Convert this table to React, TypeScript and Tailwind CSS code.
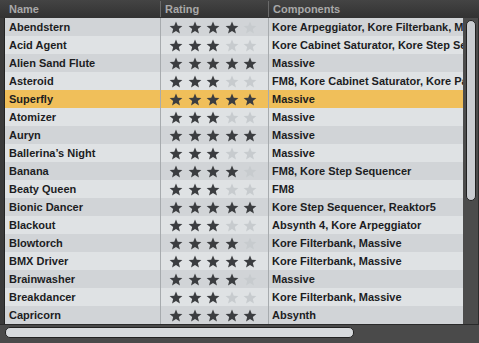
import React from "react";

type Preset = {
  name: string;
  rating: number;
  components: string;
};

const presets: Preset[] = [
  { name: "Abendstern", rating: 4, components: "Kore Arpeggiator, Kore Filterbank, Massive" },
  { name: "Acid Agent", rating: 3, components: "Kore Cabinet Saturator, Kore Step Sequencer" },
  { name: "Alien Sand Flute", rating: 5, components: "Massive" },
  { name: "Asteroid", rating: 3, components: "FM8, Kore Cabinet Saturator, Kore Pattern" },
  { name: "Superfly", rating: 5, components: "Massive" },
  { name: "Atomizer", rating: 3, components: "Massive" },
  { name: "Auryn", rating: 5, components: "Massive" },
  { name: "Ballerina’s Night", rating: 3, components: "Massive" },
  { name: "Banana", rating: 4, components: "FM8, Kore Step Sequencer" },
  { name: "Beaty Queen", rating: 3, components: "FM8" },
  { name: "Bionic Dancer", rating: 5, components: "Kore Step Sequencer, Reaktor5" },
  { name: "Blackout", rating: 3, components: "Absynth 4, Kore Arpeggiator" },
  { name: "Blowtorch", rating: 4, components: "Kore Filterbank, Massive" },
  { name: "BMX Driver", rating: 5, components: "Kore Filterbank, Massive" },
  { name: "Brainwasher", rating: 4, components: "Massive" },
  { name: "Breakdancer", rating: 3, components: "Kore Filterbank, Massive" },
  { name: "Capricorn", rating: 5, components: "Absynth" },
];

const SELECTED = "Superfly";

function Star({ filled }: { filled: boolean }) {
  return (
    <svg width="14" height="13" viewBox="0 0 24 23" className="shrink-0">
      <path
        d="M12 0.8l3.1 7.6 8.2.5-6.3 5.3 2 8L12 17.8l-7 4.4 2-8L.7 8.9l8.2-.5z"
        fill={filled ? "#3b3d40" : "#c7cbce"}
      />
    </svg>
  );
}

function Row({ preset, index }: { preset: Preset; index: number }) {
  const selected = preset.name === SELECTED;
  const bg = selected ? "bg-[#f0bf5a]" : index % 2 === 0 ? "bg-[#d1d4d7]" : "bg-[#dfe2e4]";
  return (
    <div className={`flex h-[18px] items-center ${bg}`}>
      <div className="w-[155px] shrink-0 overflow-hidden whitespace-nowrap pl-[4px]">
        {preset.name}
      </div>
      <div className="flex h-full w-[108px] shrink-0 items-center gap-[4.5px] border-l border-[#a7abae] pl-[8px]">
        {[0, 1, 2, 3, 4].map((i) => (
          <Star key={i} filled={i < preset.rating} />
        ))}
      </div>
      <div className="h-full flex-1 overflow-hidden whitespace-nowrap border-l border-[#a7abae] pl-[3px] leading-[18px]">
        {preset.components}
      </div>
    </div>
  );
}

export default function App() {
  return (
    <div
      className="flex h-[343px] w-[479px] flex-col overflow-hidden bg-[#3a3a3a] text-[11px] font-bold text-[#1c1d1f]"
      style={{ fontFamily: '"Liberation Sans", Arial, sans-serif' }}
    >
      {/* column headers */}
      <div className="flex h-[18px] shrink-0 items-center bg-gradient-to-b from-[#444444] to-[#323232] text-[#a9a9a9]">
        <div className="w-[160px] shrink-0 pl-[9px]">Name</div>
        <div className="h-[16px] w-[108px] shrink-0 border-l border-[#6a6a6a] pl-[4px] leading-[16px]">Rating</div>
        <div className="h-[16px] flex-1 border-l border-[#6a6a6a] pl-[4px] leading-[16px]">Components</div>
      </div>

      <div className="flex h-[306px] shrink-0">
        <div className="w-[5px] shrink-0 border-r border-[#232323] bg-[#3a3a3a]" />
        <div className="w-[458px] shrink-0 overflow-hidden">
          {presets.map((p, i) => (
            <Row key={p.name} preset={p} index={i} />
          ))}
        </div>
        {/* vertical scrollbar */}
        <div className="flex w-[16px] shrink-0 justify-center border-r border-[#2c2c2c] bg-[#4c4c4c] pt-[2px]">
          <div className="h-[181px] w-[10px] rounded-[5px] border border-[#222] bg-[#c9ccd0]" />
        </div>
      </div>

      {/* horizontal scrollbar */}
      <div className="flex h-[19px] shrink-0 items-start border-t border-[#2a2a2a] bg-[#4a4a4a] pl-[5px] pt-[2px]">
        <div className="h-[11px] w-[349px] rounded-[5px] border border-[#222] bg-[#d7dadd]" />
      </div>
    </div>
  );
}
